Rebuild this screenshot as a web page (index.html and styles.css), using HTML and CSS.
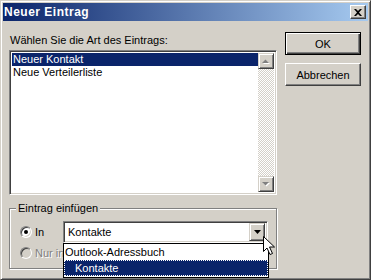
FILE: index.html
```html
<!DOCTYPE html>
<html lang="de">
<head>
  <meta charset="UTF-8">
  <title>Neuer Eintrag</title>
  <link rel="stylesheet" href="styles.css">
</head>
<body>
  <div class="window">
    <div class="titlebar">
      <span class="title">Neuer Eintrag</span>
      <div class="close-btn">
        <svg width="8" height="7" viewBox="0 0 8 7"><path d="M0 0h2l2 2 2-2h2L5 3.5 8 7H6L4 5 2 7H0l3-3.5z" fill="#000"/></svg>
      </div>
    </div>

    <div class="dialog-body">
      <div class="main-col">
        <div class="prompt">Wählen Sie die Art des Eintrags:</div>

        <div class="listbox">
          <div class="list-items">
            <div class="item selected">Neuer Kontakt</div>
            <div class="item">Neue Verteilerliste</div>
          </div>
          <div class="vscroll">
            <div class="sbtn">
              <svg width="8" height="5" viewBox="0 0 8 5"><path d="M1 5h7L4.5 1.5z" fill="#fff"/><path d="M0 4h7L3.5 0.5z" fill="#808080"/></svg>
            </div>
            <div class="track"></div>
            <div class="sbtn">
              <svg width="8" height="5" viewBox="0 0 8 5"><path d="M1 1h7L4.5 4.5z" fill="#fff"/><path d="M0 0h7L3.5 3.5z" fill="#808080"/></svg>
            </div>
          </div>
        </div>

        <div class="group">
          <span class="group-title">Eintrag einfügen</span>

          <div class="opt-row">
            <span class="radio checked"></span>
            <span class="opt-label">In</span>
            <div class="combo">
              <span class="combo-value">Kontakte</span>
              <div class="combo-btn">
                <svg width="7" height="4" viewBox="0 0 7 4"><path d="M0 0h7L3.5 4z" fill="#000"/></svg>
              </div>
              <div class="dropdown">
                <div class="dd-item">Outlook-Adressbuch</div>
                <div class="dd-item sub selected">Kontakte</div>
              </div>
            </div>
          </div>

          <div class="opt-row disabled">
            <span class="radio"></span>
            <span class="opt-label">Nur in</span>
          </div>
        </div>
      </div>

      <div class="button-col">
        <div class="btn default"><span>OK</span></div>
        <div class="btn"><span>Abbrechen</span></div>
      </div>
    </div>

    <svg class="cursor" width="13" height="20" viewBox="0 0 13 20">
      <path d="M0.5 0.5v15l3.5-3.5 3 6.5 2.5-1-3-6.5h5z" fill="#fff" stroke="#000" stroke-width="1"/>
    </svg>
  </div>
</body>
</html>
```

FILE: styles.css
```css
* {
  margin: 0;
  padding: 0;
  box-sizing: border-box;
}

body {
  background: #d4d0c8;
  font-family: "Liberation Sans", Arial, sans-serif;
  font-size: 11px;
  color: #000;
}

.window {
  position: relative;
  width: 371px;
  height: 280px;
  background: #d4d0c8;
  border: 1px solid;
  border-color: #d4d0c8 #404040 #404040 #d4d0c8;
  box-shadow: inset 1px 1px #fff, inset -1px -1px #808080;
  padding: 2px;
}

.titlebar {
  height: 18px;
  background: linear-gradient(to right, #0a246a, #a6caf0);
  display: flex;
  align-items: center;
  justify-content: space-between;
  padding: 0 2px 0 1px;
}

.title {
  color: #fff;
  font-weight: bold;
  font-size: 12px;
  letter-spacing: 0.5px;
}

.close-btn {
  width: 16px;
  height: 14px;
  background: #d4d0c8;
  border: 1px solid;
  border-color: #fff #404040 #404040 #fff;
  box-shadow: inset -1px -1px #808080;
  display: flex;
  align-items: center;
  justify-content: center;
}

.dialog-body {
  display: flex;
  gap: 8px;
  padding: 11px 0 0 6px;
}

.main-col {
  width: 268px;
}

.prompt {
  line-height: 13px;
  margin-top: 2px;
  padding-left: 1px;
}

.listbox {
  margin-top: 3px;
  height: 145px;
  background: #fff;
  border: 1px solid;
  border-color: #808080 #fff #fff #808080;
  box-shadow: inset 1px 1px #404040, inset -1px -1px #d4d0c8;
  padding: 2px;
  display: flex;
}

.list-items {
  flex: 1;
}

.item {
  height: 13px;
  line-height: 13px;
  padding-left: 1px;
  white-space: nowrap;
}

.item.selected {
  background: #0a246a;
  color: #fff;
}

.vscroll {
  width: 16px;
  display: flex;
  flex-direction: column;
}

.track {
  flex: 1;
  background: repeating-conic-gradient(#fff 0 25%, #d4d0c8 0 50%) 0 0 / 2px 2px;
}

.sbtn {
  height: 16px;
  background: #d4d0c8;
  border: 1px solid;
  border-color: #d4d0c8 #404040 #404040 #d4d0c8;
  box-shadow: inset 1px 1px #fff, inset -1px -1px #808080;
  display: flex;
  align-items: center;
  justify-content: center;
}

.group {
  position: relative;
  margin-top: 13px;
  height: 61px;
  border: 1px solid #808080;
  box-shadow: inset 1px 1px #fff, 1px 1px #fff;
  padding: 12px 0 0 10px;
}

.group-title {
  position: absolute;
  top: -7px;
  left: 6px;
  padding: 0 2px;
  background: #d4d0c8;
  line-height: 13px;
}

.opt-row {
  display: flex;
  align-items: center;
  height: 22px;
}

.opt-row.disabled {
  height: 19px;
  color: #808080;
  text-shadow: 1px 1px #fff;
}

.radio {
  position: relative;
  width: 12px;
  height: 12px;
  border-radius: 50%;
  background: #fff;
  border: 1px solid;
  border-color: #808080 #fff #fff #808080;
  box-shadow: inset 1px 1px #404040, inset -1px -1px #d4d0c8;
}

.radio.checked::after {
  content: '';
  position: absolute;
  left: 3px;
  top: 3px;
  width: 4px;
  height: 4px;
  border-radius: 50%;
  background: #000;
}

.disabled .radio {
  background: #d4d0c8;
}

.opt-label {
  width: 31px;
  padding-left: 3px;
  white-space: nowrap;
}

.combo {
  position: relative;
  width: 205px;
  height: 22px;
  background: #fff;
  border: 1px solid;
  border-color: #808080 #fff #fff #808080;
  box-shadow: inset 1px 1px #404040, inset -1px -1px #d4d0c8;
  padding: 2px;
  display: flex;
  align-items: center;
}

.combo-value {
  flex: 1;
  padding-left: 2px;
}

.combo-btn {
  width: 16px;
  height: 18px;
  background: #d4d0c8;
  border: 1px solid;
  border-color: #d4d0c8 #404040 #404040 #d4d0c8;
  box-shadow: inset 1px 1px #fff, inset -1px -1px #808080;
  display: flex;
  align-items: center;
  justify-content: center;
}

.dropdown {
  position: absolute;
  top: 21px;
  left: -1px;
  width: 206px;
  height: 35px;
  background: #fff;
  border: 1px solid #000;
  z-index: 2;
}

.dd-item {
  height: 16px;
  line-height: 16px;
  padding-left: 1px;
  white-space: nowrap;
}

.dd-item.sub {
  padding-left: 11px;
}

.dd-item.selected {
  background: #0a246a;
  color: #fff;
  outline: 1px dotted #fff;
  outline-offset: -1px;
}

.button-col {
  display: flex;
  flex-direction: column;
  gap: 8px;
}

.btn {
  width: 76px;
  height: 23px;
  background: #d4d0c8;
  border: 1px solid;
  border-color: #fff #404040 #404040 #fff;
  box-shadow: inset -1px -1px #808080;
  display: flex;
  align-items: center;
  justify-content: center;
}

.btn.default {
  border: 1px solid #000;
  box-shadow: inset 1px 1px #fff, inset -1px -1px #404040, inset -2px -2px #808080;
}

.cursor {
  position: absolute;
  left: 262px;
  top: 235px;
  z-index: 5;
}
```
